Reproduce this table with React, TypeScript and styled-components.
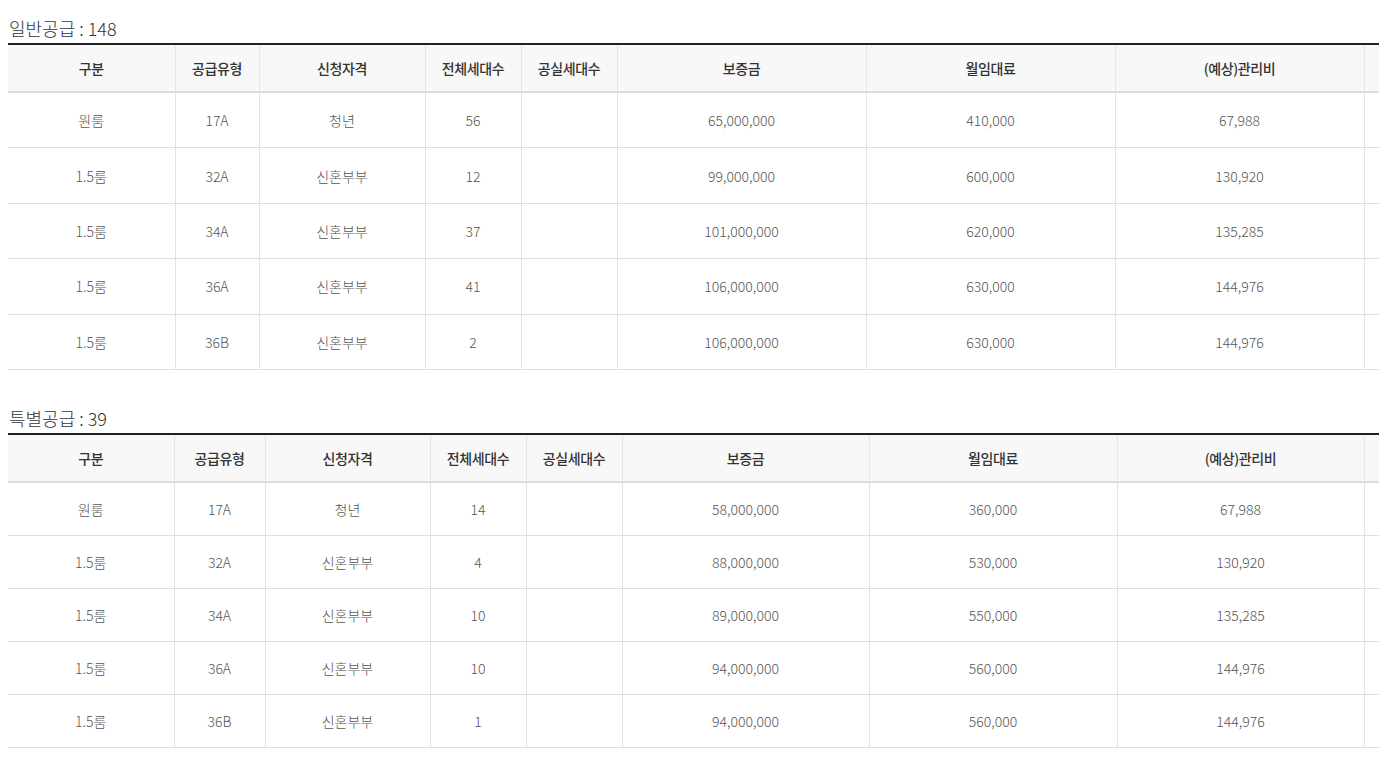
import React from 'react';
import styled, { createGlobalStyle } from 'styled-components';

const GlobalStyle = createGlobalStyle`
  html, body {
    margin: 0;
    padding: 0;
    background: #fff;
    overflow: hidden;
  }
  body {
    font-family: "Noto Sans CJK KR", "Noto Sans", sans-serif;
    color: #555;
  }
`;

const Page = styled.div`
  width: 1700px;
  padding: 16px 0 0 8px;
`;

const Section = styled.section<{ $gap?: number }>`
  margin-top: ${(p) => p.$gap ?? 0}px;
`;

const Title = styled.h3`
  margin: 0;
  height: 27px;
  font-size: 18px;
  line-height: 24px;
  font-weight: 300;
  color: #333;
  padding-left: 1px;
`;

const Table = styled.table`
  width: 1620px;
  table-layout: fixed;
  border-collapse: collapse;
  border-top: 2px solid #222;
  font-size: 14px;
`;

const HeadCell = styled.th`
  height: 46px;
  padding: 0;
  background: #f8f8f8;
  border-bottom: 2px solid #dcdcdc;
  border-right: 1px solid #e6e6e6;
  font-weight: 500;
  color: #333;
  letter-spacing: -0.4px;
  text-align: center;
  vertical-align: middle;
`;

const Cell = styled.td<{ $h: number }>`
  height: ${(p) => p.$h}px;
  padding: 0;
  border-bottom: 1px solid #dedede;
  border-right: 1px solid #e3e3e3;
  font-weight: 300;
  color: #555;
  text-align: center;
  vertical-align: middle;
`;

const headers = ['구분', '공급유형', '신청자격', '전체세대수', '공실세대수', '보증금', '월임대료', '(예상)관리비', ''];

type Row = [string, string, string, string, string, string, string, string];

const general: Row[] = [
  ['원룸', '17A', '청년', '56', '', '65,000,000', '410,000', '67,988'],
  ['1.5룸', '32A', '신혼부부', '12', '', '99,000,000', '600,000', '130,920'],
  ['1.5룸', '34A', '신혼부부', '37', '', '101,000,000', '620,000', '135,285'],
  ['1.5룸', '36A', '신혼부부', '41', '', '106,000,000', '630,000', '144,976'],
  ['1.5룸', '36B', '신혼부부', '2', '', '106,000,000', '630,000', '144,976'],
];

const special: Row[] = [
  ['원룸', '17A', '청년', '14', '', '58,000,000', '360,000', '67,988'],
  ['1.5룸', '32A', '신혼부부', '4', '', '88,000,000', '530,000', '130,920'],
  ['1.5룸', '34A', '신혼부부', '10', '', '89,000,000', '550,000', '135,285'],
  ['1.5룸', '36A', '신혼부부', '10', '', '94,000,000', '560,000', '144,976'],
  ['1.5룸', '36B', '신혼부부', '1', '', '94,000,000', '560,000', '144,976'],
];

function SupplyTable({
  title,
  rows,
  cols,
  rowHeight,
  gap,
}: {
  title: string;
  rows: Row[];
  cols: number[];
  rowHeight: number;
  gap?: number;
}) {
  return (
    <Section $gap={gap}>
      <Title>{title}</Title>
      <Table>
        <colgroup>
          {cols.map((w, i) => (
            <col key={i} style={{ width: w }} />
          ))}
        </colgroup>
        <thead>
          <tr>
            {headers.map((h, i) => (
              <HeadCell key={i}>{h}</HeadCell>
            ))}
          </tr>
        </thead>
        <tbody>
          {rows.map((r, i) => (
            <tr key={i}>
              {r.map((v, j) => (
                <Cell key={j} $h={rowHeight}>
                  {v}
                </Cell>
              ))}
              <Cell $h={rowHeight} />
            </tr>
          ))}
        </tbody>
      </Table>
    </Section>
  );
}

export default function App() {
  return (
    <>
      <GlobalStyle />
      <Page>
        <SupplyTable
          title="일반공급 : 148"
          rows={general}
          cols={[167, 84, 166, 96, 96, 249, 249, 249, 264]}
          rowHeight={54.4}
        />
        <SupplyTable
          title="특별공급 : 39"
          rows={special}
          cols={[166, 91, 165, 96, 96, 247, 248, 247, 264]}
          rowHeight={52}
          gap={36}
        />
      </Page>
    </>
  );
}
